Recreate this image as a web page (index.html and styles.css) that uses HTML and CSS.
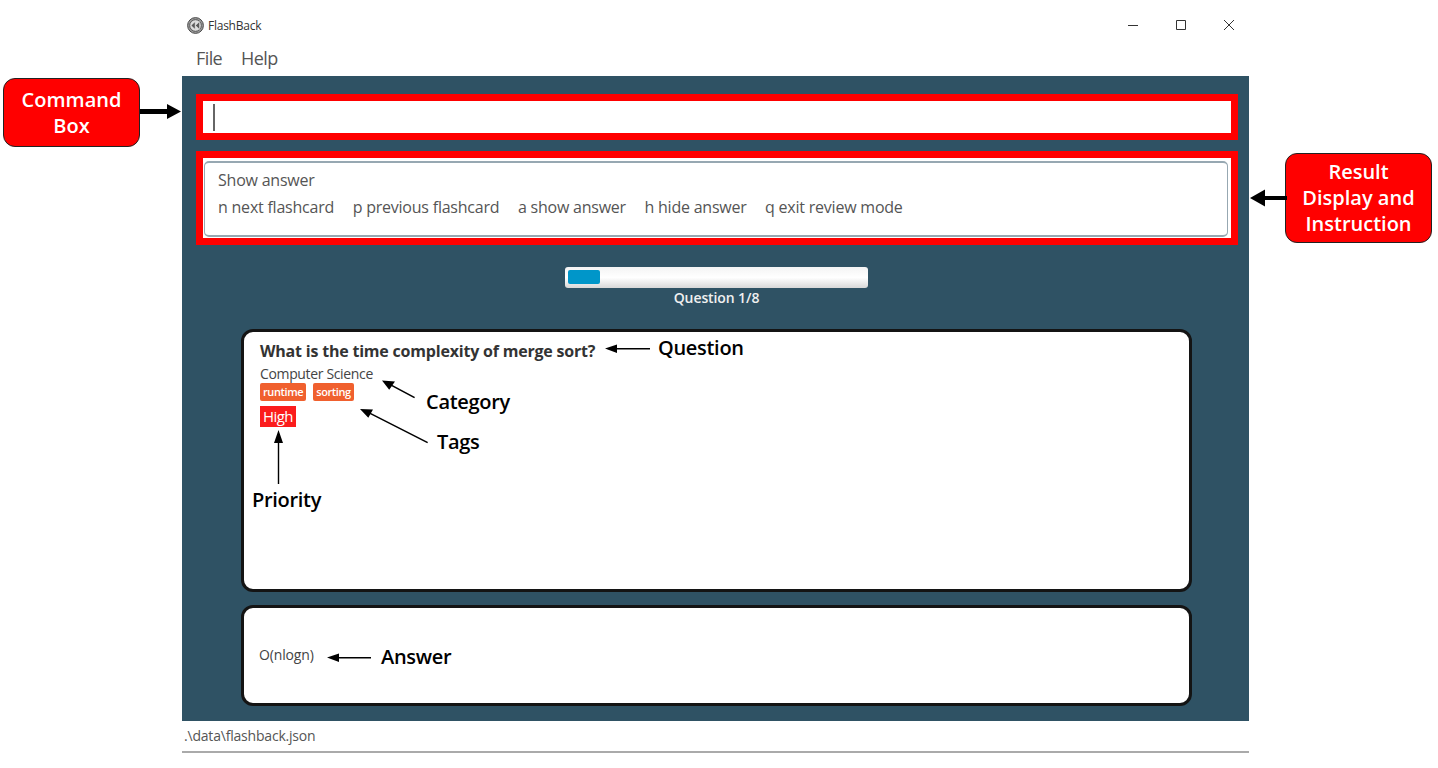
FILE: index.html
```html
<!DOCTYPE html>
<html lang="en">
<head>
    <meta charset="UTF-8">
    <title>FlashBack</title>
    <link rel="stylesheet" href="styles.css">
</head>
<body>
    <div class="window">
        <header class="titlebar">
            <svg class="app-icon" width="17" height="17" viewBox="0 0 17 17">
                <circle cx="8.5" cy="8.5" r="7.9" fill="#9a9a9a" stroke="#4d4d4d" stroke-width="1"/>
                <circle cx="8.5" cy="8.5" r="5.8" fill="#dedede" stroke="#4d4d4d" stroke-width="0.9"/>
                <path d="M8.200 4.600 4 8.500 8.200 12.400Z M12.600 4.600 8.400 8.500 12.600 12.400Z" fill="#5a5a5a" stroke="#f4f4f4" stroke-width="0.5"/>
            </svg>
            <span class="app-name">FlashBack</span>
            <div class="win-controls">
                <svg width="12" height="12" viewBox="0 0 12 12"><path d="M1 6.500h10" stroke="#333" fill="none"/></svg>
                <svg width="12" height="12" viewBox="0 0 12 12"><path d="M1.500 1.500h9v9h-9z" stroke="#333" fill="none"/></svg>
                <svg width="12" height="12" viewBox="0 0 12 12"><path d="M1 1l10 10M11 1 1 11" stroke="#333" fill="none"/></svg>
            </div>
        </header>
        <nav class="menubar">
            <span>File</span>
            <span>Help</span>
        </nav>
        <main class="content">
            <div class="command-box"><span class="caret"></span></div>
            <div class="result-box">
                <div class="result-inner">
                    <p class="result-title">Show answer</p>
                    <p class="result-keys">
                        <span>n next flashcard</span>
                        <span>p previous flashcard</span>
                        <span>a show answer</span>
                        <span>h hide answer</span>
                        <span>q exit review mode</span>
                    </p>
                </div>
            </div>
            <div class="progress">
                <div class="progress-track"><div class="progress-fill"></div></div>
                <p class="progress-label">Question 1/8</p>
            </div>
            <section class="card question-card">
                <h2 class="question">What is the time complexity of merge sort?</h2>
                <p class="category">Computer Science</p>
                <div class="tags">
                    <span class="tag">runtime</span>
                    <span class="tag">sorting</span>
                </div>
                <span class="priority">High</span>
            </section>
            <section class="card answer-card">
                <p class="answer">O(nlogn)</p>
            </section>
        </main>
        <footer class="statusbar">.\data\flashback.json</footer>
    </div>

    <div class="callout callout-command">Command<br>Box</div>
    <div class="callout callout-result">Result<br>Display and<br>Instruction</div>

    <svg class="arrows" width="1438" height="768" viewBox="0 0 1438 768">
        <g fill="#000" stroke="none">
            <path d="M140 109h27v-5l14 7.500-14 7.500v-5h-27z"/>
            <path d="M1287 196h-22v-6.500l-15 8.500 15 8.500v-6.500h22z"/>
            <path d="M605 348.500l12-4v3.500h33v1.500h-33v3.500z"/>
            <path d="M382 380.500l13 1-2.500 3.500 22.500 12-.8 1.300-22.500-12-2.500 3.500z"/>
            <path d="M360 409l13 .5-2 3.500 57 29-.7 1.300-57-29-2 3.500z"/>
            <path d="M278.500 430l4.500 13h-3.800v41h-1.400v-41h-3.800z"/>
            <path d="M327 657.500l12-4v3.500h32v1.500h-32v3.500z"/>
        </g>
    </svg>
    <span class="note note-question">Question</span>
    <span class="note note-category">Category</span>
    <span class="note note-tags">Tags</span>
    <span class="note note-priority">Priority</span>
    <span class="note note-answer">Answer</span>
</body>
</html>
```

FILE: styles.css
```css
*{
    margin: 0;
    box-sizing: border-box;
}
body
{
    background-color: #fff;
    font-family: "Open Sans", "Noto Sans", sans-serif;
    height: 768px;
    overflow: hidden;
    position: relative;
}
.window
{
    width: 1067px;
    margin-left: 182px;
    display: flex;
    flex-direction: column;
}
.titlebar
{
    height: 40px;
    display: flex;
    align-items: center;
    padding: 10px 0 0 5px;
}
.app-name
{
    font-size: 12px;
    color: #333;
    margin-left: 4px;
    letter-spacing: -0.25px;
}
.win-controls
{
    margin-left: auto;
    display: flex;
    gap: 36px;
    padding-right: 14px;
}
.menubar
{
    height: 36px;
    display: flex;
    align-items: center;
    gap: 19px;
    padding-left: 14px;
    font-size: 18px;
    letter-spacing: -0.6px;
    color: #555;
}
.content
{
    height: 645px;
    background-color: #2f5264;
    padding: 18px 11px 0 14px;
    display: flex;
    flex-direction: column;
}
.command-box
{
    height: 46px;
    border: 7px solid #f00;
    background-color: #fff;
    display: flex;
    align-items: center;
    padding-left: 10px;
}
.caret
{
    width: 2px;
    height: 27px;
    background-color: #666;
}
.result-box
{
    height: 94px;
    margin-top: 11px;
    border: 7px solid #f00;
    background-color: #fff;
    padding: 3px 3px 1px 1px;
}
.result-inner
{
    height: 100%;
    border: 1px solid #97a8b2;
    border-width: 2px 1px;
    border-radius: 5px;
    padding: 6px 0 0 13px;
    color: #555;
    font-size: 16px;
    letter-spacing: -0.22px;
}
.result-title
{
    line-height: 22px;
}
.result-keys
{
    display: flex;
    gap: 18.500px;
    line-height: 22px;
    margin-top: 5px;
}
.progress
{
    margin-top: 22px;
    align-self: center;
    width: 303px;
    margin-left: -1px;
    display: flex;
    flex-direction: column;
    align-items: center;
}
.progress-track
{
    width: 100%;
    height: 21px;
    padding: 3px;
    border-radius: 3px;
    background: linear-gradient(#f4f4f4, #fff 50%, #d8d8d8);
}
.progress-fill
{
    width: 32px;
    height: 14px;
    background-color: #0096c9;
    border-radius: 2px;
}
.progress-label
{
    font-size: 14px;
    font-weight: 600;
    color: #f0f0f0;
    margin-top: 1px;
    line-height: 18px;
    letter-spacing: -0.1px;
}
.card
{
    background-color: #fff;
    border: 3px solid #141414;
    border-radius: 12px;
    margin-left: 45px;
    margin-right: 46px;
    padding-left: 16px;
}
.question-card
{
    height: 263px;
    margin-top: 22px;
    padding-top: 7px;
    display: flex;
    flex-direction: column;
    align-items: flex-start;
}
.question
{
    font-size: 16px;
    font-weight: 700;
    line-height: 24px;
    letter-spacing: -0.2px;
    color: #333;
}
.category
{
    font-size: 14px;
    line-height: 19px;
    color: #444;
    margin-top: 1px;
    letter-spacing: -0.35px;
}
.tags
{
    display: flex;
    gap: 7px;
}
.tag
{
    background-color: #f0602e;
    color: #fff;
    font-size: 11px;
    font-weight: 600;
    line-height: 18px;
    padding: 0 3px;
    border-radius: 2px;
    letter-spacing: -0.4px;
}
.priority
{
    margin-top: 5px;
    background-color: #fb1c1c;
    color: #fff;
    font-size: 15px;
    line-height: 21px;
    padding: 0 3px;
    letter-spacing: -0.6px;
}
.answer-card
{
    height: 101px;
    margin-top: 13px;
    display: flex;
    align-items: center;
    padding-left: 15px;
}
.answer
{
    font-size: 14px;
    color: #444;
    margin-top: -3px;
    letter-spacing: -0.15px;
}
.statusbar
{
    height: 32px;
    border-bottom: 2px solid #aaa;
    padding: 5px 0 0 2px;
    font-size: 14px;
    color: #555;
    letter-spacing: -0.2px;
}
.callout
{
    position: absolute;
    background-color: #f00;
    border: 1px solid #222;
    border-radius: 12px;
    color: #fff;
    font-weight: 600;
    font-size: 20px;
    line-height: 26px;
    text-align: center;
    display: flex;
    align-items: center;
    justify-content: center;
}
.callout-command
{
    left: 3px;
    top: 78px;
    width: 137px;
    height: 69px;
}
.callout-result
{
    left: 1285px;
    top: 153px;
    width: 147px;
    height: 90px;
}
.arrows
{
    position: absolute;
    left: 0;
    top: 0;
    pointer-events: none;
}
.note
{
    position: absolute;
    font-size: 20px;
    font-weight: 600;
    color: #000;
    line-height: 26px;
    letter-spacing: -0.3px;
}
.note-question { left: 658px; top: 335px; }
.note-category { left: 426px; top: 389px; }
.note-tags { left: 437px; top: 429px; }
.note-priority { left: 252px; top: 487px; }
.note-answer { left: 381px; top: 644px; }
```
